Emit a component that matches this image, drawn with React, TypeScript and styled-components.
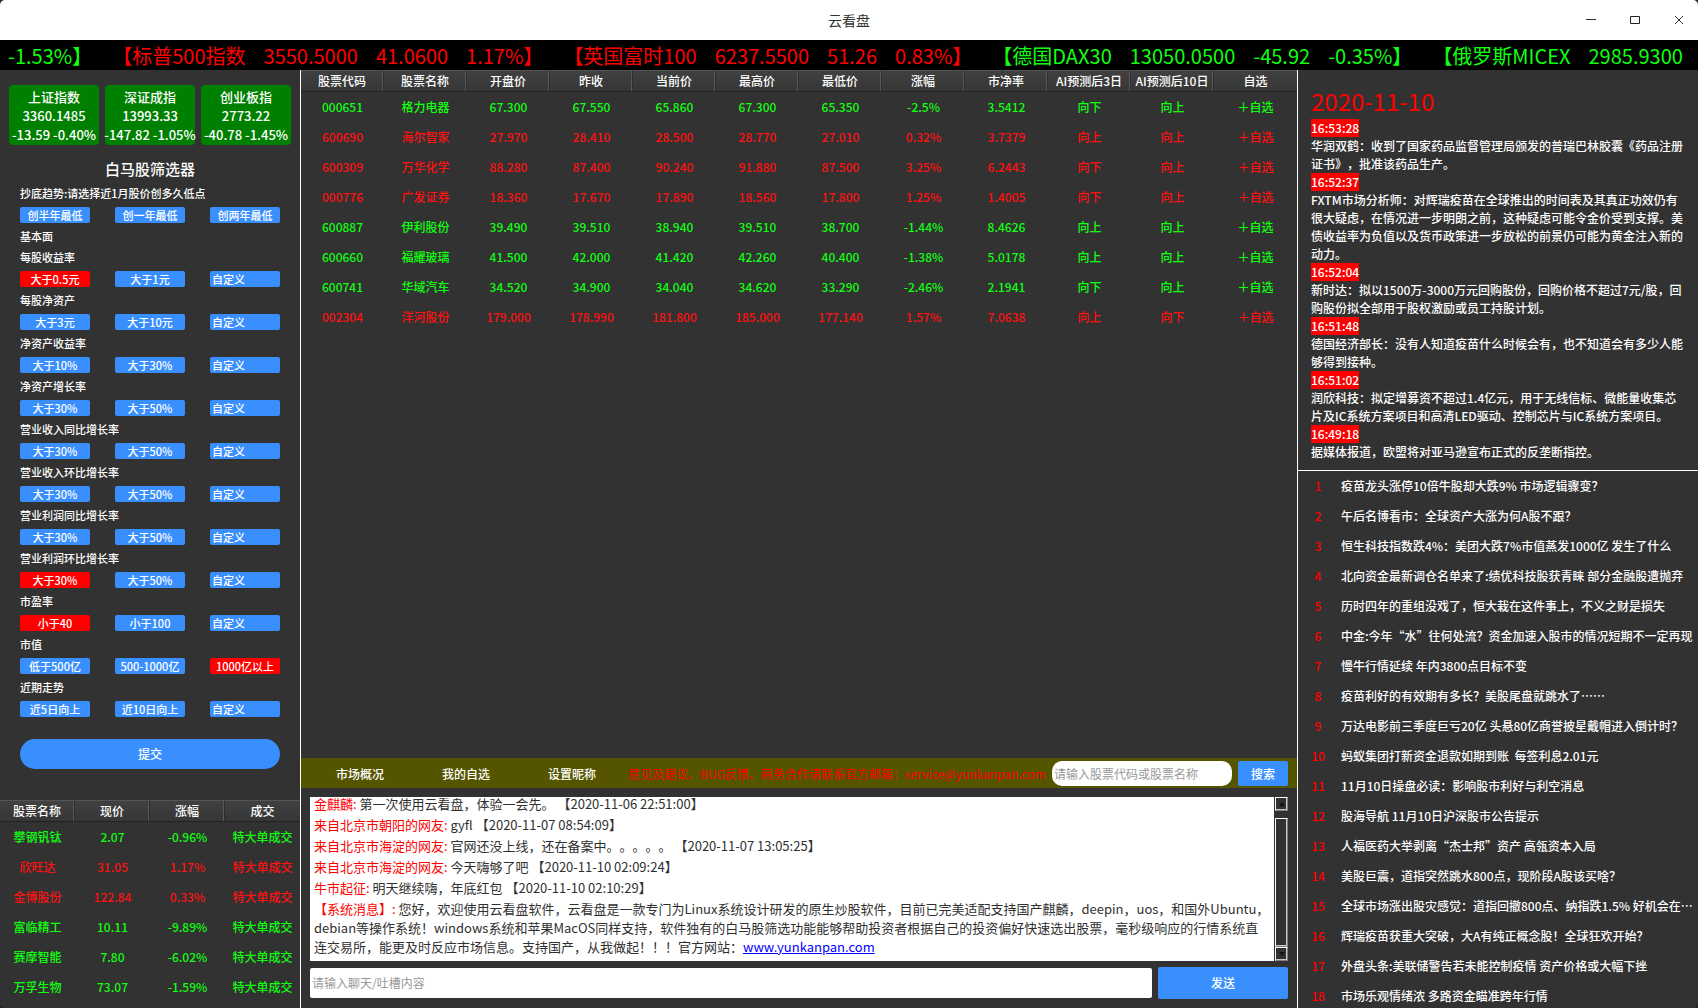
import React from "react";
import styled, { createGlobalStyle, css } from "styled-components";

const GlobalStyle = createGlobalStyle`
  *, *::before, *::after { box-sizing: border-box; }
  html, body { margin: 0; height: 100%; background: #14293a; }
  #root { height: 100%; }
  body { text-spacing-trim: space-all; }
  body, button, input { font-family: "Noto Sans CJK SC", "Noto Sans", sans-serif; }
  button { border: 0; padding: 0; margin: 0; cursor: pointer; }
  input { border: 0; margin: 0; outline: 0; }
  p, h1, h2 { margin: 0; font-weight: inherit; }
`;

const RED = "#ff1111";
const GREEN = "#11ff11";
const BLUE = "#3a8fff";

const Window = styled.div`
  display: flex;
  flex-direction: column;
  height: 100vh;
  overflow: hidden;
  border-radius: 5px;
  background: #323232;
  color: #fff;
  font-size: 12px;
  font-weight: 500;
`;

const TitleBar = styled.header`
  display: grid;
  grid-template-columns: 1fr auto 1fr;
  align-items: center;
  flex: none;
  height: 40px;
  background: #fff;
  color: #303030;
`;

const WindowTitle = styled.h1`
  grid-column: 2;
  font-size: 14px;
  font-weight: 400;
  line-height: 20px;
`;

const WindowControls = styled.div`
  display: flex;
  gap: 6px;
  justify-self: end;
`;

const WindowButton = styled.button`
  display: flex;
  align-items: center;
  justify-content: center;
  width: 38px;
  height: 40px;
  background: transparent;
`;

const Ticker = styled.div`
  display: flex;
  gap: 20px;
  flex: none;
  height: 30px;
  padding-left: 8px;
  overflow: hidden;
  background: #000;
  font-size: 20px;
  font-weight: 400;
  line-height: 32px;
  white-space: nowrap;
`;

const TickerItem = styled.span<{ $up: boolean }>`
  display: flex;
  flex: none;
  gap: 18px;
  color: ${(p) => (p.$up ? "#ff0000" : GREEN)};
`;

const Body = styled.div`
  display: grid;
  grid-template-columns: 301px minmax(0, 1fr) 401px;
  flex: 1;
  min-height: 0;
`;

const Sidebar = styled.aside`
  display: flex;
  flex-direction: column;
  min-height: 0;
  overflow: hidden;
  padding-bottom: 6px;
  border-right: 1px solid #fff;
`;

const IndexCards = styled.div`
  display: grid;
  grid-template-columns: repeat(3, minmax(0, 1fr));
  gap: 6px;
  padding: 15px 9px 11px;
`;

const IndexCard = styled.div`
  display: flex;
  flex-direction: column;
  align-items: center;
  height: 60px;
  padding-top: 2px;
  border-radius: 4px;
  background: #008000;
  font-size: 13px;
  line-height: 19px;
  white-space: nowrap;
`;

const FilterTitle = styled.h2`
  margin-bottom: 2px;
  font-size: 15px;
  line-height: 25px;
  text-align: center;
`;

const FilterForm = styled.form`
  padding: 0 20px;
  font-size: 11px;
`;

const FilterLabel = styled.div`
  line-height: 21px;
`;

const FilterRow = styled.div`
  display: grid;
  grid-template-columns: repeat(3, minmax(0, 1fr));
  gap: 25px;
  padding: 3px 0;
`;

const chip = css`
  width: 100%;
  height: 16px;
  border-radius: 2px;
  color: #fff;
  font-size: 11px;
  font-weight: 500;
  line-height: 16px;
`;

const Chip = styled.button<{ $active: boolean }>`
  ${chip}
  background: ${(p) => (p.$active ? "#ff0000" : BLUE)};
  white-space: nowrap;
`;

const ChipInput = styled.input`
  ${chip}
  min-width: 0;
  padding: 0 2px;
  background: ${BLUE};
  &::placeholder { color: #fff; opacity: 1; }
`;

const SubmitButton = styled.button`
  width: 100%;
  height: 30px;
  margin-top: 19px;
  padding-bottom: 2px;
  border-radius: 15px;
  background: ${BLUE};
  color: #fff;
  font-size: 12px;
  font-weight: 500;
`;

const DataTable = styled.table`
  width: 100%;
  border-collapse: separate;
  border-spacing: 0;
  table-layout: fixed;
  text-align: center;
  white-space: nowrap;
`;

const HeadCell = styled.th`
  height: 22px;
  padding: 0;
  border-top: 1px solid #545454;
  border-right: 1px solid #2e2e2e;
  border-bottom: 1px solid #222;
  background: linear-gradient(#404040, #363636);
  box-shadow: inset -1px 0 #585858;
  font-weight: 500;
  line-height: 20px;
  &:last-child {
    border-right: 0;
    box-shadow: none;
  }
`;

const Row = styled.tr<{ $up: boolean }>`
  height: 30px;
  color: ${(p) => (p.$up ? RED : GREEN)};
`;

const Cell = styled.td`
  padding: 0;
  line-height: 18px;
`;

const DealsTable = styled(DataTable)`
  margin-top: auto;
`;

const Center = styled.main`
  display: flex;
  flex-direction: column;
  min-width: 0;
  min-height: 0;
`;

const QuoteArea = styled.section`
  flex: 1;
  min-height: 0;
  overflow: hidden;
`;

const ToolBar = styled.nav`
  display: flex;
  align-items: center;
  gap: 6px;
  flex: none;
  height: 30px;
  padding: 0 9px;
  background: #555500;
`;

const MenuButton = styled.button`
  flex: none;
  width: 100px;
  height: 30px;
  background: transparent;
  color: #fff;
  font-size: 12px;
  font-weight: 500;
`;

const Notice = styled.span`
  flex: 1;
  min-width: 0;
  color: #ff0000;
  font-weight: 400;
  white-space: nowrap;
`;

const SearchInput = styled.input`
  flex: none;
  width: 180px;
  height: 25px;
  padding: 0 2px;
  border-radius: 10px;
  background: #fff;
  font-size: 12px;
  &::placeholder { color: #999; opacity: 1; }
`;

const ActionButton = styled.button<{ $wide?: boolean }>`
  flex: none;
  width: ${(p) => (p.$wide ? 130 : 50)}px;
  height: ${(p) => (p.$wide ? 32 : 25)}px;
  padding-bottom: ${(p) => (p.$wide ? 2 : 0)}px;
  border-radius: 2px;
  background: ${BLUE};
  color: #fff;
  font-size: 12px;
  font-weight: 500;
`;

const ChatPanel = styled.section`
  display: flex;
  flex-direction: column;
  gap: 6px;
  flex: none;
  padding: 9px;
`;

const ChatBox = styled.div`
  display: flex;
  height: 164px;
`;

const ChatLog = styled.div`
  display: flex;
  flex: 1;
  flex-direction: column;
  justify-content: flex-end;
  gap: 2px;
  min-width: 0;
  overflow: hidden;
  padding: 0 4px 5px;
  background: #fff;
  color: #303030;
  font-size: 13px;
  font-weight: 400;
  line-height: 19px;
`;

const Sender = styled.span`
  color: #ff0000;
`;

const SiteLink = styled.a`
  color: #0000ff;
`;

const ScrollBar = styled.div`
  display: flex;
  flex: none;
  flex-direction: column;
  width: 14px;
  padding-left: 1px;
`;

const bevel = css`
  border-style: solid;
  border-width: 1px;
  border-color: #fff #808080 #808080 #fff;
  box-shadow: inset -1px -1px #c8c8c8;
  background: #323232;
`;

const ScrollArrow = styled.button`
  && {
    ${bevel}
  }
  display: flex;
  align-items: center;
  justify-content: center;
  flex: none;
  width: 13px;
  height: 14px;
`;

const ScrollTrack = styled.div`
  display: flex;
  flex: 1;
  padding-top: 7px;
`;

const ScrollThumb = styled.div`
  ${bevel}
  flex: 1;
`;

const ChatForm = styled.form`
  display: flex;
  align-items: center;
  gap: 6px;
`;

const ChatInput = styled.input`
  flex: 1;
  min-width: 0;
  height: 30px;
  padding: 0 2px 2px;
  border-radius: 2px;
  background: #fff;
  font-size: 12px;
  &::placeholder { color: #999; opacity: 1; }
`;

const NewsPanel = styled.aside`
  min-height: 0;
  overflow: hidden;
  border-left: 1px solid #fff;
`;

const Flash = styled.section`
  padding: 12px 13px 9px;
  border-bottom: 1px solid #fff;
  line-height: 18px;
`;

const FlashDate = styled.h2`
  color: #ff0000;
  font-size: 24px;
  font-weight: 400;
  line-height: 37px;
`;

const FlashTime = styled.time`
  display: table;
  background: #ff0000;
`;

const Headlines = styled.ol`
  margin: 0;
  padding: 0;
  list-style: none;
`;

const Headline = styled.li`
  display: grid;
  grid-template-columns: 40px minmax(0, 1fr);
  column-gap: 3px;
  align-items: center;
  height: 30px;
  padding-right: 3px;
  line-height: 18px;
  white-space: pre;
`;

const Rank = styled.span`
  color: #ff0000;
  text-align: center;
`;

const HeadlineText = styled.span`
  overflow: hidden;
  text-overflow: ellipsis;
`;

const ticker = [
  { up: false, parts: ["-1.53%】"] },
  { up: true, parts: ["【标普500指数", "3550.5000", "41.0600", "1.17%】"] },
  { up: true, parts: ["【英国富时100", "6237.5500", "51.26", "0.83%】"] },
  { up: false, parts: ["【德国DAX30", "13050.0500", "-45.92", "-0.35%】"] },
  { up: false, parts: ["【俄罗斯MICEX", "2985.9300"] },
];

const indexes = [
  ["上证指数", "3360.1485", "-13.59 -0.40%"],
  ["深证成指", "13993.33", "-147.82 -1.05%"],
  ["创业板指", "2773.22", "-40.78 -1.45%"],
];

const CUSTOM = "自定义";

const filters: { labels: string[]; options: string[]; active?: number }[] = [
  { labels: ["抄底趋势:请选择近1月股价创多久低点"], options: ["创半年最低", "创一年最低", "创两年最低"] },
  { labels: ["基本面", "每股收益率"], options: ["大于0.5元", "大于1元", CUSTOM], active: 0 },
  { labels: ["每股净资产"], options: ["大于3元", "大于10元", CUSTOM] },
  { labels: ["净资产收益率"], options: ["大于10%", "大于30%", CUSTOM] },
  { labels: ["净资产增长率"], options: ["大于30%", "大于50%", CUSTOM] },
  { labels: ["营业收入同比增长率"], options: ["大于30%", "大于50%", CUSTOM] },
  { labels: ["营业收入环比增长率"], options: ["大于30%", "大于50%", CUSTOM] },
  { labels: ["营业利润同比增长率"], options: ["大于30%", "大于50%", CUSTOM] },
  { labels: ["营业利润环比增长率"], options: ["大于30%", "大于50%", CUSTOM], active: 0 },
  { labels: ["市盈率"], options: ["小于40", "小于100", CUSTOM], active: 0 },
  { labels: ["市值"], options: ["低于500亿", "500-1000亿", "1000亿以上"], active: 2 },
  { labels: ["近期走势"], options: ["近5日向上", "近10日向上", CUSTOM] },
];

const dealColumns = ["股票名称", "现价", "涨幅", "成交"];
const deals = [
  ["攀钢钒钛", "2.07", "-0.96%", "特大单成交"],
  ["欣旺达", "31.05", "1.17%", "特大单成交"],
  ["金博股份", "122.84", "0.33%", "特大单成交"],
  ["富临精工", "10.11", "-9.89%", "特大单成交"],
  ["赛摩智能", "7.80", "-6.02%", "特大单成交"],
  ["万孚生物", "73.07", "-1.59%", "特大单成交"],
];

const quoteColumns = ["股票代码", "股票名称", "开盘价", "昨收", "当前价", "最高价", "最低价", "涨幅", "市净率", "AI预测后3日", "AI预测后10日", "自选"];
const quotes = [
  ["000651", "格力电器", "67.300", "67.550", "65.860", "67.300", "65.350", "-2.5%", "3.5412", "向下", "向上", "＋自选"],
  ["600690", "海尔智家", "27.970", "28.410", "28.500", "28.770", "27.010", "0.32%", "3.7379", "向上", "向上", "＋自选"],
  ["600309", "万华化学", "88.280", "87.400", "90.240", "91.880", "87.500", "3.25%", "6.2443", "向下", "向上", "＋自选"],
  ["000776", "广发证券", "18.360", "17.670", "17.890", "18.560", "17.800", "1.25%", "1.4005", "向下", "向上", "＋自选"],
  ["600887", "伊利股份", "39.490", "39.510", "38.940", "39.510", "38.700", "-1.44%", "8.4626", "向上", "向上", "＋自选"],
  ["600660", "福耀玻璃", "41.500", "42.000", "41.420", "42.260", "40.400", "-1.38%", "5.0178", "向上", "向上", "＋自选"],
  ["600741", "华域汽车", "34.520", "34.900", "34.040", "34.620", "33.290", "-2.46%", "2.1941", "向下", "向上", "＋自选"],
  ["002304", "洋河股份", "179.000", "178.990", "181.800", "185.000", "177.140", "1.57%", "7.0638", "向上", "向下", "＋自选"],
];

const messages = [
  ["金麒麟:", "第一次使用云看盘，体验一会先。 【2020-11-06 22:51:00】"],
  ["来自北京市朝阳的网友:", "gyfl 【2020-11-07 08:54:09】"],
  ["来自北京市海淀的网友:", "官网还没上线，还在备案中。。。。。 【2020-11-07 13:05:25】"],
  ["来自北京市海淀的网友:", "今天嗨够了吧 【2020-11-10 02:09:24】"],
  ["牛市起征:", "明天继续嗨，年底红包 【2020-11-10 02:10:29】"],
];

const flashes = [
  ["16:53:28", "华润双鹤：收到了国家药品监督管理局颁发的普瑞巴林胶囊《药品注册证书》，批准该药品生产。"],
  ["16:52:37", "FXTM市场分析师：对辉瑞疫苗在全球推出的时间表及其真正功效仍有很大疑虑，在情况进一步明朗之前，这种疑虑可能令金价受到支撑。美债收益率为负值以及货币政策进一步放松的前景仍可能为黄金注入新的动力。"],
  ["16:52:04", "新时达：拟以1500万-3000万元回购股份，回购价格不超过7元/股，回购股份拟全部用于股权激励或员工持股计划。"],
  ["16:51:48", "德国经济部长：没有人知道疫苗什么时候会有，也不知道会有多少人能够得到接种。"],
  ["16:51:02", "润欣科技：拟定增募资不超过1.4亿元，用于无线信标、微能量收集芯片及IC系统方案项目和高清LED驱动、控制芯片与IC系统方案项目。"],
  ["16:49:18", "据媒体报道，欧盟将对亚马逊宣布正式的反垄断指控。"],
];

const headlines = [
  "疫苗龙头涨停10倍牛股却大跌9% 市场逻辑骤变？",
  "午后名博看市：全球资产大涨为何A股不跟？",
  "恒生科技指数跌4%：美团大跌7%市值蒸发1000亿 发生了什么",
  "北向资金最新调仓名单来了:绩优科技股获青睐 部分金融股遭抛弃",
  "历时四年的重组没戏了，恒大栽在这件事上，不义之财是损失",
  "中金:今年“水”往何处流？资金加速入股市的情况短期不一定再现",
  "慢牛行情延续 年内3800点目标不变",
  "疫苗利好的有效期有多长？美股尾盘就跳水了……",
  "万达电影前三季度巨亏20亿 头悬80亿商誉披星戴帽进入倒计时？",
  "蚂蚁集团打新资金退款如期到账  每签利息2.01元",
  "11月10日操盘必读：影响股市利好与利空消息",
  "股海导航 11月10日沪深股市公告提示",
  "人福医药大举剥离“杰士邦”资产 高瓴资本入局",
  "美股巨震，道指突然跳水800点，现阶段A股该买啥？",
  "全球市场涨出股灾感觉：道指回撤800点、纳指跌1.5% 好机会在…",
  "辉瑞疫苗获重大突破，大A有纯正概念股！全球狂欢开始？",
  "外盘头条:美联储警告若未能控制疫情 资产价格或大幅下挫",
  "市场乐观情绪浓 多路资金瞄准跨年行情",
];

const isDown = (value: string) => value.startsWith("-");

function FilterOption({ label, option, active }: { label: string; option: string; active: boolean }) {
  if (option === CUSTOM) {
    return <ChipInput type="text" placeholder={CUSTOM} aria-label={label} />;
  }
  return <Chip type="button" $active={active} aria-pressed={active}>{option}</Chip>;
}

export default function App() {
  return (
    <>
      <GlobalStyle />
      <Window>
        <TitleBar>
          <WindowTitle>云看盘</WindowTitle>
          <WindowControls>
            <WindowButton type="button" aria-label="最小化">
              <svg width="10" height="10" viewBox="0 0 10 10"><path d="M0 4.5H10" stroke="#303030" /></svg>
            </WindowButton>
            <WindowButton type="button" aria-label="最大化">
              <svg width="10" height="8" viewBox="0 0 10 8"><path d="M.5.5H9.5V7.5H.5Z" fill="none" stroke="#202020" /></svg>
            </WindowButton>
            <WindowButton type="button" aria-label="关闭">
              <svg width="8" height="8" viewBox="0 0 8 8"><path d="M0 0L8 8M8 0L0 8" stroke="#303030" /></svg>
            </WindowButton>
          </WindowControls>
        </TitleBar>

        <Ticker>
          {ticker.map((item) => (
            <TickerItem key={item.parts[0]} $up={item.up}>
              {item.parts.map((part) => <span key={part}>{part}</span>)}
            </TickerItem>
          ))}
        </Ticker>

        <Body>
          <Sidebar>
            <IndexCards>
              {indexes.map((lines) => (
                <IndexCard key={lines[0]}>
                  {lines.map((line) => <p key={line}>{line}</p>)}
                </IndexCard>
              ))}
            </IndexCards>
            <FilterTitle>白马股筛选器</FilterTitle>
            <FilterForm onSubmit={(e) => e.preventDefault()}>
              {filters.map(({ labels, options, active }) => (
                <React.Fragment key={labels[0]}>
                  {labels.map((label) => <FilterLabel key={label}>{label}</FilterLabel>)}
                  <FilterRow>
                    {options.map((option, i) => (
                      <FilterOption key={option} label={labels[labels.length - 1]} option={option} active={active === i} />
                    ))}
                  </FilterRow>
                </React.Fragment>
              ))}
              <SubmitButton type="submit">提交</SubmitButton>
            </FilterForm>
            <DealsTable>
              <thead>
                <tr>{dealColumns.map((c) => <HeadCell key={c}>{c}</HeadCell>)}</tr>
              </thead>
              <tbody>
                {deals.map((deal) => (
                  <Row key={deal[0]} $up={!isDown(deal[2])}>
                    {deal.map((value, i) => <Cell key={i}>{value}</Cell>)}
                  </Row>
                ))}
              </tbody>
            </DealsTable>
          </Sidebar>

          <Center>
            <QuoteArea>
              <DataTable>
                <thead>
                  <tr>{quoteColumns.map((c) => <HeadCell key={c}>{c}</HeadCell>)}</tr>
                </thead>
                <tbody>
                  {quotes.map((quote) => (
                    <Row key={quote[0]} $up={!isDown(quote[7])}>
                      {quote.map((value, i) => <Cell key={i}>{value}</Cell>)}
                    </Row>
                  ))}
                </tbody>
              </DataTable>
            </QuoteArea>
            <ToolBar>
              <MenuButton type="button">市场概况</MenuButton>
              <MenuButton type="button">我的自选</MenuButton>
              <MenuButton type="button">设置昵称</MenuButton>
              <Notice>意见及建议、BUG反馈、商务合作请联系官方邮箱：service@yunkanpan.com</Notice>
              <SearchInput type="text" placeholder="请输入股票代码或股票名称" aria-label="搜索股票" />
              <ActionButton type="button">搜索</ActionButton>
            </ToolBar>
            <ChatPanel>
              <ChatBox>
                <ChatLog>
                  {messages.map(([sender, text]) => (
                    <p key={text}><Sender>{sender}</Sender> {text}</p>
                  ))}
                  <p>
                    <Sender>【系统消息】:</Sender> 您好，欢迎使用云看盘软件，云看盘是一款专门为Linux系统设计研发的原生炒股软件，目前已完美适配支持国产麒麟，deepin，uos，和国外Ubuntu，debian等操作系统！windows系统和苹果MacOS同样支持，软件独有的白马股筛选功能能够帮助投资者根据自己的投资偏好快速选出股票，毫秒级响应的行情系统直连交易所，能更及时反应市场信息。支持国产，从我做起！！！官方网站：<SiteLink href="#site">www.yunkanpan.com</SiteLink>
                  </p>
                </ChatLog>
                <ScrollBar>
                  <ScrollArrow type="button" aria-label="向上滚动">
                    <svg width="6" height="4" viewBox="0 0 6 4"><path d="M0 4L3 0L6 4Z" fill="#111" /></svg>
                  </ScrollArrow>
                  <ScrollTrack><ScrollThumb /></ScrollTrack>
                  <ScrollArrow type="button" aria-label="向下滚动">
                    <svg width="6" height="4" viewBox="0 0 6 4"><path d="M0 0L3 4L6 0Z" fill="#111" /></svg>
                  </ScrollArrow>
                </ScrollBar>
              </ChatBox>
              <ChatForm onSubmit={(e) => e.preventDefault()}>
                <ChatInput type="text" placeholder="请输入聊天/吐槽内容" aria-label="聊天内容" />
                <ActionButton type="submit" $wide>发送</ActionButton>
              </ChatForm>
            </ChatPanel>
          </Center>

          <NewsPanel>
            <Flash>
              <FlashDate>2020-11-10</FlashDate>
              {flashes.map(([time, text]) => (
                <React.Fragment key={time}>
                  <FlashTime>{time}</FlashTime>
                  <p>{text}</p>
                </React.Fragment>
              ))}
            </Flash>
            <Headlines>
              {headlines.map((text, i) => (
                <Headline key={text}>
                  <Rank>{i + 1}</Rank>
                  <HeadlineText>{text}</HeadlineText>
                </Headline>
              ))}
            </Headlines>
          </NewsPanel>
        </Body>
      </Window>
    </>
  );
}
